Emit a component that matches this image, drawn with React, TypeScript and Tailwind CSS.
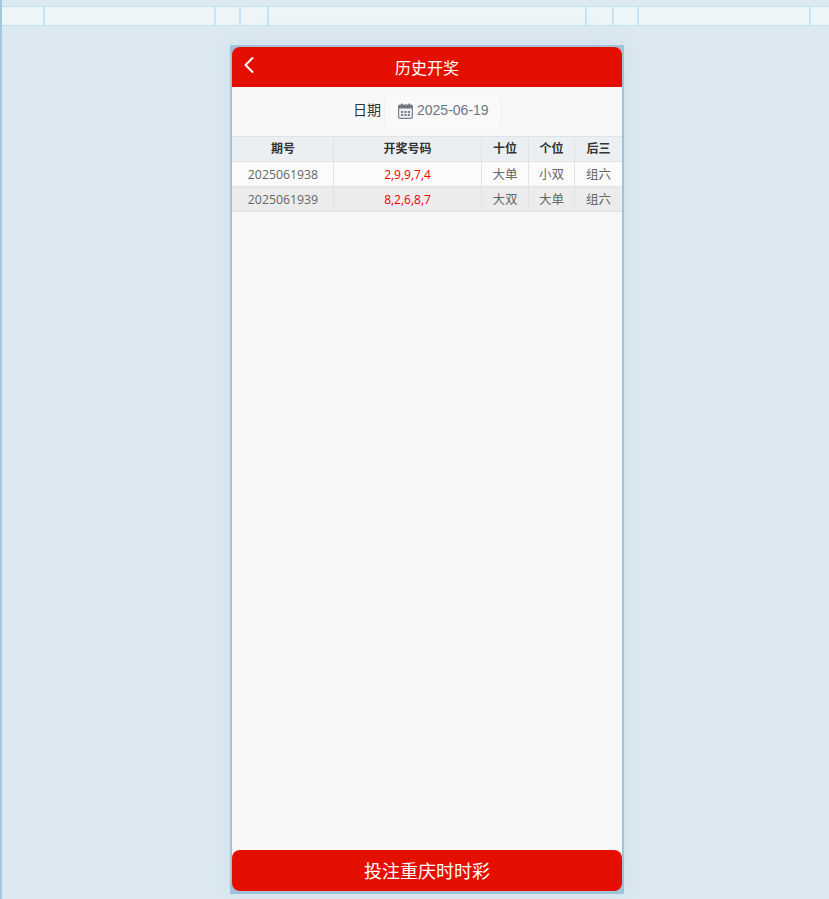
const stripCells = [41, 169, 23, 26, 316, 25, 23, 170];
const cols = ["w-[101px]", "w-[148px]", "w-[47px]", "w-[46px]", "w-[48px]"];
const rows = [
  { id: "2025061938", nums: "2,9,9,7,4", a: "大单", b: "小双", c: "组六", bg: "bg-[#fbfbfb]" },
  { id: "2025061939", nums: "8,2,6,8,7", a: "大双", b: "大单", c: "组六", bg: "bg-[#ececec]" },
];

function Row({ cells, className, cellClass }: { cells: string[]; className: string; cellClass: (i: number) => string }) {
  return (
    <div className={`flex h-[25px] border-b border-[#e0e2e4] ${className}`}>
      {cells.map((c, i) => (
        <div key={i} className={`${cols[i]} flex items-center justify-center border-l border-[#e0e2e4] first:border-l-0 ${cellClass(i)}`}>
          {c}
        </div>
      ))}
    </div>
  );
}

export default function App() {
  return (
    <div className="h-[899px] overflow-hidden bg-[#dce9f1] border-l-2 border-[#a6c6dd] font-['Open_Sans','Noto_Sans_CJK_SC',sans-serif]">
      <div className="pt-[6px]">
        <div className="flex h-[20px] border-y border-[#c4e3f9] bg-[#edf5f9]">
          {stripCells.map((w, i) => (
            <div key={i} style={{ width: w }} className="shrink-0 border-r-2 border-[#c4e3f9] box-content" />
          ))}
        </div>
      </div>
      <div className="ml-[228px] mt-[19px] flex h-[849px] w-[394px] flex-col bg-[#a1c3d9] px-[2px] pt-[2px] pb-[3px] shadow-[0_0_24px_rgba(120,150,180,0.12)]">
        <header className="relative flex h-[40px] shrink-0 items-center justify-center rounded-t-lg bg-[#e50f00] text-[16px] text-white font-['Noto_Sans_CJK_SC',sans-serif]">
          <svg className="absolute left-[10px] top-[9px]" width="14" height="18" viewBox="0 0 14 18" fill="none" stroke="#fff" strokeWidth="2" strokeLinecap="round" strokeLinejoin="round">
            <path d="M10.5 2 L3.5 9 L10.5 16" />
          </svg>
          历史开奖
        </header>
        <div className="flex h-[49px] shrink-0 items-center justify-center bg-[#f8f8f8] pl-[1px]">
          <span className="mr-[3px] pb-[4px] text-[14px] text-[#333] font-['Noto_Sans_CJK_SC',sans-serif]">日期</span>
          <div className="flex h-[36px] w-[118px] items-center rounded-lg border border-[#f0f1f3] bg-[#f9f9f9] pb-[2px] pl-[13px]">
            <svg width="15" height="16" viewBox="0 0 15 16" className="mr-[4px] shrink-0">
              <rect x="0.6" y="2" width="13.8" height="13.4" rx="1.5" fill="#eef0f4" stroke="#7a8090" strokeWidth="1.2" />
              <rect x="0.6" y="2" width="13.8" height="3.6" rx="1" fill="#6f7687" />
              <rect x="3.2" y="0.5" width="1.4" height="3" fill="#8a6f60" />
              <rect x="10.4" y="0.5" width="1.4" height="3" fill="#8a6f60" />
              <rect x="3" y="8" width="2.2" height="2" fill="#7a8090" />
              <rect x="6.4" y="8" width="2.2" height="2" fill="#7a8090" />
              <rect x="9.8" y="8" width="2.2" height="2" fill="#7a8090" />
              <rect x="3" y="11" width="2.2" height="2" fill="#7a8090" />
              <rect x="6.4" y="11" width="2.2" height="2" fill="#7a8090" />
              <rect x="9.8" y="11" width="2.2" height="2" fill="#7a8090" />
            </svg>
            <span className="text-[14px] text-[#6b7785] font-['Liberation_Sans',sans-serif]">2025-06-19</span>
          </div>
        </div>
        <div className="grow bg-[#f8f8f8] text-[12px]">
          <div className="border-t border-[#e0e2e4]">
            <Row
              cells={["期号", "开奖号码", "十位", "个位", "后三"]}
              className="bg-[#ebeff2] font-bold text-[#333]"
              cellClass={(i) => (i === 0 ? "pl-[1px]" : "")}
            />
          </div>
          {rows.map((r) => (
            <Row
              key={r.id}
              cells={[r.id, r.nums, r.a, r.b, r.c]}
              className={`${r.bg} text-[#666]`}
              cellClass={(i) => (i === 1 ? "pt-[2px] text-[#f00000]" : i === 0 ? "pl-[1px] pt-[2px] text-[12.3px]" : "pt-[2px] text-[12.5px]")}
            />
          ))}
        </div>
        <div className="shrink-0 bg-[linear-gradient(#f8f8f8_50%,#a1c3d9_50%)]">
          <button className="flex h-[41px] w-full items-center justify-center rounded-lg bg-[#e50f00] text-[18px] text-white font-['Noto_Sans_CJK_SC',sans-serif]">
            投注重庆时时彩
          </button>
        </div>
      </div>
    </div>
  );
}
